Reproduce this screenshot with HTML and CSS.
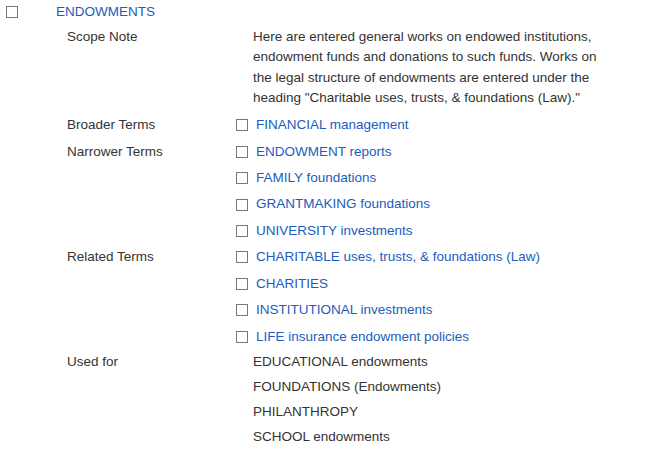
FILE: index.html
```html
<!DOCTYPE html>
<html lang="en">
<head>
    <meta charset="UTF-8">
    <meta name="viewport" content="width=device-width, initial-scale=1.0">
    <title>Endowments</title>
    <link rel="stylesheet" href="styles.css">
</head>
<body>
    <div class="entry">
        <div class="heading">
            <span class="check"></span>
            <a href="#" class="term-link">ENDOWMENTS</a>
        </div>
        <dl class="fields">
            <div class="field scope">
                <dt>Scope Note</dt>
                <dd class="note">Here are entered general works on endowed institutions, endowment funds and donations to such funds. Works on the legal structure of endowments are entered under the heading "Charitable uses, trusts, &amp; foundations (Law)."</dd>
            </div>
            <div class="field">
                <dt>Broader Terms</dt>
                <dd>
                    <div class="term"><span class="check"></span><a href="#" class="term-link">FINANCIAL management</a></div>
                </dd>
            </div>
            <div class="field">
                <dt>Narrower Terms</dt>
                <dd>
                    <div class="term"><span class="check"></span><a href="#" class="term-link">ENDOWMENT reports</a></div>
                    <div class="term"><span class="check"></span><a href="#" class="term-link">FAMILY foundations</a></div>
                    <div class="term"><span class="check"></span><a href="#" class="term-link">GRANTMAKING foundations</a></div>
                    <div class="term"><span class="check"></span><a href="#" class="term-link">UNIVERSITY investments</a></div>
                </dd>
            </div>
            <div class="field">
                <dt>Related Terms</dt>
                <dd>
                    <div class="term"><span class="check"></span><a href="#" class="term-link">CHARITABLE uses, trusts, &amp; foundations (Law)</a></div>
                    <div class="term"><span class="check"></span><a href="#" class="term-link">CHARITIES</a></div>
                    <div class="term"><span class="check"></span><a href="#" class="term-link">INSTITUTIONAL investments</a></div>
                    <div class="term"><span class="check"></span><a href="#" class="term-link">LIFE insurance endowment policies</a></div>
                </dd>
            </div>
            <div class="field used">
                <dt>Used for</dt>
                <dd>
                    <div class="plain">EDUCATIONAL endowments</div>
                    <div class="plain">FOUNDATIONS (Endowments)</div>
                    <div class="plain">PHILANTHROPY</div>
                    <div class="plain">SCHOOL endowments</div>
                </dd>
            </div>
        </dl>
    </div>
</body>
</html>
```

FILE: styles.css
```css
body {
    font-family: "Liberation Sans", Arial, sans-serif;
    font-size: 13.5px;
    line-height: 20.25px;
    color: #333;
    margin: 0;
    padding: 0;
    background-color: #fff;
}
.entry {
    padding-top: 1.6px;
}
.heading {
    display: flex;
    align-items: center;
    padding: 0 0 5.2px 6px;
}
.heading .check {
    margin-right: 38px;
}
.term-link {
    color: #1d5cbc;
    text-decoration: none;
}
.check {
    display: inline-block;
    width: 12px;
    height: 12px;
    box-sizing: border-box;
    border: 1px solid #777;
    background-color: #fff;
    flex-shrink: 0;
}
.fields {
    margin: 0;
}
.field {
    display: grid;
    grid-template-columns: 186px 1fr;
    padding-left: 67px;
}
dt {
    padding: 3.1px 0;
}
dd {
    margin: 0;
}
.scope dt {
    padding: 0;
}
.note {
    width: 360px;
    padding-bottom: 4px;
}
.term {
    display: flex;
    align-items: center;
    gap: 8px;
    margin-left: -17px;
    padding: 3.1px 0;
}
.used dt {
    padding: 2.3px 0;
}
.plain {
    padding: 2.3px 0;
}
```
